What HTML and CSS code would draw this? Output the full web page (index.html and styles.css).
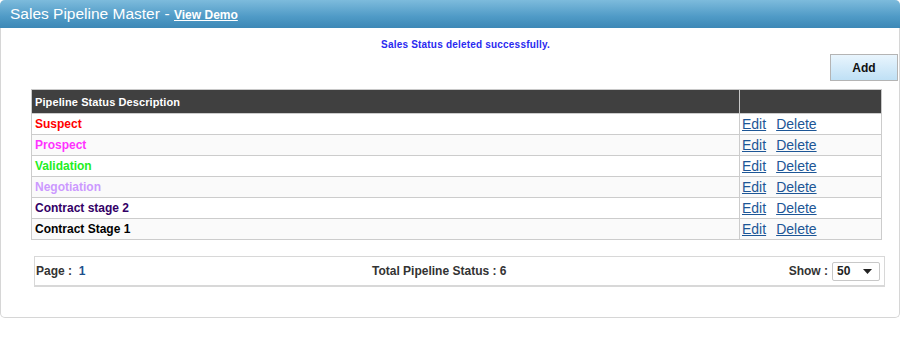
FILE: index.html
```html
<!DOCTYPE html>
<html>
<head>
<meta charset="utf-8">
<link rel="stylesheet" href="styles.css">
</head>
<body>
<div class="panel">
  <div class="panel-head">
    <span class="title">Sales Pipeline Master</span> <span class="dash">-</span> <a class="demo" href="#">View Demo</a>
  </div>
  <div class="panel-body">
    <div class="msg">Sales Status deleted successfully.</div>
    <div class="toolbar"><button class="btn-add">Add</button></div>
    <table class="grid">
      <thead>
        <tr><th class="c-desc">Pipeline Status Description</th><th class="c-act"></th></tr>
      </thead>
      <tbody>
        <tr><td class="s-red">Suspect</td><td class="act"><a href="#">Edit</a><a href="#">Delete</a></td></tr>
        <tr class="alt"><td class="s-pink">Prospect</td><td class="act"><a href="#">Edit</a><a href="#">Delete</a></td></tr>
        <tr><td class="s-green">Validation</td><td class="act"><a href="#">Edit</a><a href="#">Delete</a></td></tr>
        <tr class="alt"><td class="s-lav">Negotiation</td><td class="act"><a href="#">Edit</a><a href="#">Delete</a></td></tr>
        <tr><td class="s-purple">Contract stage 2</td><td class="act"><a href="#">Edit</a><a href="#">Delete</a></td></tr>
        <tr class="alt"><td class="s-black">Contract Stage 1</td><td class="act"><a href="#">Edit</a><a href="#">Delete</a></td></tr>
      </tbody>
    </table>
    <div class="pager">
      <div class="pg-left">Page :&nbsp; <span class="pg-num">1</span></div>
      <div class="pg-mid">Total Pipeline Status : 6</div>
      <div class="pg-right">Show : <span class="sel"><span class="sel-val">50</span><svg width="9" height="5" viewBox="0 0 9 5"><path d="M0 0H9L4.5 5Z" fill="#222"/></svg></span></div>
    </div>
  </div>
</div>
</body>
</html>
```
FILE: styles.css
```css
html, body { margin: 0; padding: 0; background: #fff; }
body { font-family: "Liberation Sans", Arial, sans-serif; }

.panel {
  width: 900px;
  box-sizing: border-box;
  border: 1px solid #d6d6d6;
  border-top: 0;
  border-radius: 5px;
  height: 318px;
}

.panel-head {
  height: 28px;
  line-height: 27px;
  padding-left: 10px;
  border-radius: 5px 5px 0 0;
  margin: 0 -1px;
  background: linear-gradient(#7dbbdc, #4f9ac6 60%, #3d88b6);
  color: #fff;
  white-space: nowrap;
}
.title { font-size: 15.5px; }
.dash { font-size: 15.5px; }
.demo { color: #fff; font-size: 12px; font-weight: bold; text-decoration: underline; }

.msg {
  margin-top: 11px;
  padding-left: 31px;
  text-align: center;
  font-size: 10px;
  font-weight: bold;
  color: #2a2af0;
  letter-spacing: 0.2px;
  height: 14px;
}

.toolbar {
  display: flex;
  justify-content: flex-end;
  padding-right: 1px;
  margin-top: 1px;
}
.btn-add {
  width: 68px;
  height: 27px;
  border: 1px solid #b4b4b4;
  background: linear-gradient(#e9f5fd, #bfe0f5);
  font-family: "Liberation Sans", Arial, sans-serif;
  font-size: 12px;
  font-weight: bold;
  color: #111;
  padding: 0;
}

.grid {
  margin-top: 8px;
  margin-left: 30px;
  width: 851px;
  border-collapse: collapse;
  border: 1px solid #c8c8c8;
}
.grid th {
  background: #404040;
  color: #fff;
  font-size: 11px;
  font-weight: bold;
  text-align: left;
  height: 23px;
  padding: 0 0 0 3px;
  border: 1px solid #c8c8c8;
  border-top: 0;
  border-bottom: 0;
  letter-spacing: 0.1px;
}
.grid th.c-desc { width: 704px; border-left: 0; }
.grid td {
  height: 20px;
  padding: 0 0 0 3px;
  border: 1px solid #cccccc;
  font-size: 12px;
  font-weight: bold;
  background: #fff;
}
.grid tr.alt td { background: #fafafa; }
.grid td.act { font-weight: normal; font-size: 14px; padding-left: 2px; }
.grid td.act a { color: #1d5696; text-decoration: underline; margin-right: 10px; }

.s-red { color: #ff0000; }
.s-pink { color: #ff33ff; }
.s-green { color: #22ee22; }
.s-lav { color: #cc99ff; }
.s-purple { color: #330066; }
.s-black { color: #000; }

.pager {
  margin-top: 16px;
  margin-left: 33px;
  width: 851px;
  height: 31px;
  box-sizing: border-box;
  border: 1px solid #d8d8d8;
  border-bottom-width: 2px;
  display: grid;
  grid-template-columns: 337px auto 1fr;
  align-items: center;
  font-size: 12px;
  font-weight: bold;
  color: #333;
}
.pg-left { padding-left: 1px; }
.pg-num { color: #1d4f8c; }
.pg-right { display: flex; justify-content: flex-end; align-items: center; padding-right: 4px; }
.sel {
  margin-left: 4px;
  width: 48px;
  height: 19px;
  box-sizing: border-box;
  border: 1px solid #c8c8c8;
  border-radius: 2px;
  background: #fff;
  display: flex;
  align-items: center;
  justify-content: space-between;
  padding: 0 7px 0 4px;
  color: #222;
}
```
